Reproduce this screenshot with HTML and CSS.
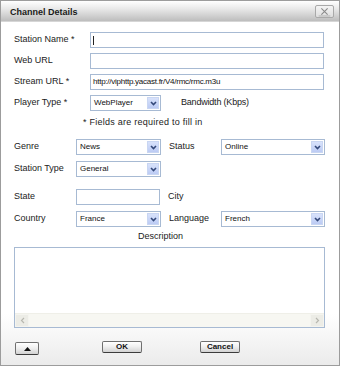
FILE: index.html
```html
<!DOCTYPE html>
<html>
<head>
<meta charset="utf-8">
<link rel="stylesheet" href="styles.css">
</head>
<body>
<div class="dialog">
  <div class="titlebar">
    <span class="title">Channel Details</span>
    <span class="close">
      <svg width="19" height="13" viewBox="0 0 19 13"><path d="M6 3 L13 10 M13 3 L6 10" stroke="#8a8a8a" stroke-width="1.2" fill="none"/><path d="M3 11.5 H16" stroke="#b0b0b0" stroke-width="1"/></svg>
    </span>
  </div>
  <div class="form">
    <div class="row r1">
      <span class="label wide">Station Name *</span>
      <div class="input long"><span class="caret"></span></div>
    </div>
    <div class="row r2">
      <span class="label wide">Web URL</span>
      <div class="input long"></div>
    </div>
    <div class="row r2">
      <span class="label wide">Stream URL *</span>
      <div class="input long">http://viphttp.yacast.fr/V4/rmc/rmc.m3u</div>
    </div>
    <div class="row r2">
      <span class="label wide">Player Type *</span>
      <div class="select player"><span class="val">WebPlayer</span><span class="arrow"><svg width="7" height="5" viewBox="0 0 7 5"><path d="M1 1 L3.5 3.5 L6 1" stroke="#34497a" stroke-width="1.6" fill="none"/></svg></span></div>
      <span class="label bw">Bandwidth (Kbps)</span>
    </div>
    <div class="note">* Fields are required to fill in</div>

    <div class="row r-genre">
      <span class="label narrow">Genre</span>
      <div class="select mid"><span class="val">News</span><span class="arrow"><svg width="7" height="5" viewBox="0 0 7 5"><path d="M1 1 L3.5 3.5 L6 1" stroke="#34497a" stroke-width="1.6" fill="none"/></svg></span></div>
      <span class="label right">Status</span>
      <div class="select big"><span class="val">Online</span><span class="arrow"><svg width="7" height="5" viewBox="0 0 7 5"><path d="M1 1 L3.5 3.5 L6 1" stroke="#34497a" stroke-width="1.6" fill="none"/></svg></span></div>
    </div>
    <div class="row r-type">
      <span class="label narrow">Station Type</span>
      <div class="select mid"><span class="val">General</span><span class="arrow"><svg width="7" height="5" viewBox="0 0 7 5"><path d="M1 1 L3.5 3.5 L6 1" stroke="#34497a" stroke-width="1.6" fill="none"/></svg></span></div>
    </div>
    <div class="row r-state">
      <span class="label narrow">State</span>
      <div class="input mid"></div>
      <span class="label right">City</span>
    </div>
    <div class="row r-type">
      <span class="label narrow">Country</span>
      <div class="select mid"><span class="val">France</span><span class="arrow"><svg width="7" height="5" viewBox="0 0 7 5"><path d="M1 1 L3.5 3.5 L6 1" stroke="#34497a" stroke-width="1.6" fill="none"/></svg></span></div>
      <span class="label right">Language</span>
      <div class="select big"><span class="val">French</span><span class="arrow"><svg width="7" height="5" viewBox="0 0 7 5"><path d="M1 1 L3.5 3.5 L6 1" stroke="#34497a" stroke-width="1.6" fill="none"/></svg></span></div>
    </div>
    <div class="desc">Description</div>
    <div class="textarea">
      <div class="ta-body"></div>
      <div class="hscroll">
        <span class="sbtn"><svg width="5" height="7" viewBox="0 0 5 7"><path d="M4 1 L1.5 3.5 L4 6" stroke="#b8b8b0" stroke-width="1.2" fill="none"/></svg></span>
        <span class="strack"></span>
        <span class="sbtn"><svg width="5" height="7" viewBox="0 0 5 7"><path d="M1 1 L3.5 3.5 L1 6" stroke="#b8b8b0" stroke-width="1.2" fill="none"/></svg></span>
      </div>
    </div>
    <div class="buttons">
      <span class="btn up"><svg width="7" height="4" viewBox="0 0 7 4"><path d="M0 4 L3.5 0 L7 4 Z" fill="#111"/></svg></span>
      <span class="btn ok">OK</span>
      <span class="btn cancel">Cancel</span>
    </div>
  </div>
</div>
</body>
</html>
```
FILE: styles.css
```css
html, body {
  margin: 0;
  padding: 0;
  background: #ffffff;
}
body {
  font-family: "Liberation Sans", Arial, sans-serif;
  color: #222;
}
.dialog {
  width: 340px;
  height: 366px;
  box-sizing: border-box;
  border: 1px solid #9c9c9c;
  background: linear-gradient(to bottom, #ffffff 0%, #ffffff 86%, #ebebeb 100%);
  display: flex;
  flex-direction: column;
}
.titlebar {
  height: 20px;
  border-bottom: 1px solid #d6d6d6;
  background: linear-gradient(to bottom, #ffffff 0%, #e8e8e8 40%, #bdbdbd 100%);
  display: flex;
  align-items: center;
  justify-content: space-between;
  padding: 0 5px 0 9px;
}
.title {
  font-size: 9px;
  font-weight: bold;
  color: #1a1a1a;
  margin-top: 1px;
}
.close {
  width: 17px;
  height: 11px;
  border: 1px solid #a9a9a9;
  border-radius: 2px;
  background: linear-gradient(to bottom, #f4f4f4, #dedede);
  display: flex;
  align-items: center;
  justify-content: center;
  overflow: hidden;
  margin-top: 1px;
}
.form {
  padding: 10px 0 0 13px;
  display: flex;
  flex-direction: column;
}
.row {
  display: flex;
  align-items: center;
  height: 16px;
}
.r2 { margin-top: 5px; }
.r-genre { margin-top: 11px; }
.r-type { margin-top: 6px; }
.r-state { margin-top: 12px; }
.label {
  font-size: 9px;
  color: #222;
  line-height: 12px;
  margin-bottom: 2px;
  white-space: nowrap;
}
.label.wide { width: 76px; }
.label.narrow { width: 62px; }
.label.right { width: 52px; margin-left: 8px; }
.label.bw { margin-left: 20px; letter-spacing: -0.2px; }
.input {
  box-sizing: border-box;
  height: 16px;
  border: 1px solid #a7bad3;
  background: #fff;
  font-size: 8px;
  line-height: 14px;
  padding-left: 2px;
  color: #111;
  display: flex;
  align-items: center;
  white-space: nowrap;
  letter-spacing: -0.25px;
}
.input.long { width: 234px; }
.input.mid { width: 84px; }
.caret {
  width: 1px;
  height: 9px;
  background: #222;
}
.select {
  box-sizing: border-box;
  height: 16px;
  border: 1px solid #a7bad3;
  background: #fff;
  display: flex;
  align-items: stretch;
  justify-content: space-between;
  padding: 1px;
}
.select.player { width: 71px; }
.select.mid { width: 85px; }
.select.big { width: 104px; }
.select .val {
  font-size: 8px;
  line-height: 12px;
  padding-left: 2px;
  color: #111;
}
.select .arrow {
  width: 12px;
  box-sizing: border-box;
  border: 1px solid #c9d6f2;
  background: linear-gradient(to bottom, #d8e2fb, #bccbf4);
  display: flex;
  align-items: center;
  justify-content: center;
}
.note {
  font-size: 9px;
  line-height: 12px;
  height: 12px;
  margin-top: 5px;
  padding-left: 69px;
  letter-spacing: 0.25px;
  color: #222;
}
.desc {
  font-size: 9px;
  line-height: 12px;
  height: 12px;
  margin-top: 3px;
  padding-left: 124px;
  color: #222;
}
.textarea {
  margin-top: 5px;
  width: 311px;
  height: 81px;
  box-sizing: border-box;
  border: 1px solid #a7bad3;
  background: #fff;
  display: flex;
  flex-direction: column;
}
.ta-body { flex: 1; }
.hscroll {
  height: 13px;
  display: flex;
  background: #f7f7f2;
  border-top: 1px solid #efefe8;
}
.sbtn {
  width: 12px;
  background: #ecece6;
  border: 1px solid #f4f4ef;
  display: flex;
  align-items: center;
  justify-content: center;
}
.strack { flex: 1; }
.buttons {
  margin-top: 13px;
  display: flex;
  align-items: flex-start;
  height: 14px;
}
.btn {
  box-sizing: border-box;
  height: 12px;
  border: 1px solid #6f6f6f;
  border-bottom-color: #3c3c3c;
  border-radius: 2px;
  background: linear-gradient(to bottom, #ffffff 0%, #f0f0f0 45%, #d2d2d2 100%);
  font-size: 8px;
  font-weight: bold;
  color: #111;
  display: flex;
  align-items: center;
  justify-content: center;
  line-height: 10px;
}
.btn.up {
  width: 24px;
  height: 13px;
  margin-left: 1px;
  margin-top: 1px;
}
.btn.ok {
  width: 40px;
  margin-left: 63px;
}
.btn.cancel {
  width: 40px;
  margin-left: 58px;
}
```
